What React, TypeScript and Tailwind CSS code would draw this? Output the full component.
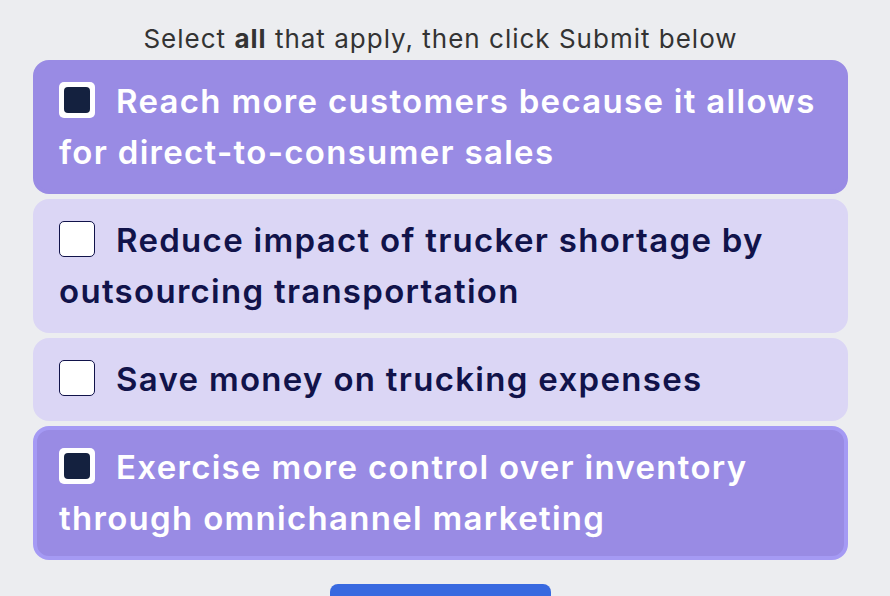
import React, { useState } from "react";

interface Choice {
  id: number;
  label: string;
}

const choices: Choice[] = [
  { id: 1, label: "Reach more customers because it allows for direct-to-consumer sales" },
  { id: 2, label: "Reduce impact of trucker shortage by outsourcing transportation" },
  { id: 3, label: "Save money on trucking expenses" },
  { id: 4, label: "Exercise more control over inventory through omnichannel marketing" },
];

const App: React.FC = () => {
  const [selected, setSelected] = useState<number[]>([1, 4]);
  const focused = 4;

  const toggle = (id: number) => {
    setSelected((prev) => (prev.includes(id) ? prev.filter((x) => x !== id) : [...prev, id]));
  };

  return (
    <div
      className="h-[596px] bg-[#ecedf0] overflow-hidden"
      style={{ fontFamily: "Inter, 'Noto Sans', sans-serif" }}
    >
      <div className="w-[815px] ml-[33px] pt-[22px]">
        <p className="text-center text-[26px] leading-[34px] tracking-[1px] text-[#333333] mb-[4px]">
          Select <span className="font-bold">all</span> that apply, then click Submit below
        </p>

        <div className="flex flex-col gap-[5px]">
          {choices.map((c) => {
            const isOn = selected.includes(c.id);
            return (
              <button
                key={c.id}
                onClick={() => toggle(c.id)}
                className={`text-left rounded-[16px] border-4 pl-[22px] pr-[16px] py-[12px] text-[33px] leading-[51px] font-semibold tracking-[1.3px] ${
                  isOn ? "bg-[#998be4] text-white" : "bg-[#dbd6f5] text-[#11134a]"
                } ${c.id === focused ? "border-[#a59af4]" : isOn ? "border-[#998be4]" : "border-[#dbd6f5]"}`}
              >
                <span
                  className={`inline-block align-[-5px] w-[36px] h-[36px] rounded-[5px] mr-[21px] ${
                    isOn ? "bg-white p-[5px]" : "bg-white border border-[#11134a]"
                  }`}
                >
                  {isOn && <span className="block w-full h-full rounded-[4px] bg-[#14213f]" />}
                </span>
                {c.label}
              </button>
            );
          })}
        </div>

        <div className="flex justify-center mt-[24px]">
          <button className="w-[221px] h-[48px] rounded-[8px] bg-[#3869e0] text-white text-[20px] font-semibold">
            Submit
          </button>
        </div>
      </div>
    </div>
  );
};

export default App;
